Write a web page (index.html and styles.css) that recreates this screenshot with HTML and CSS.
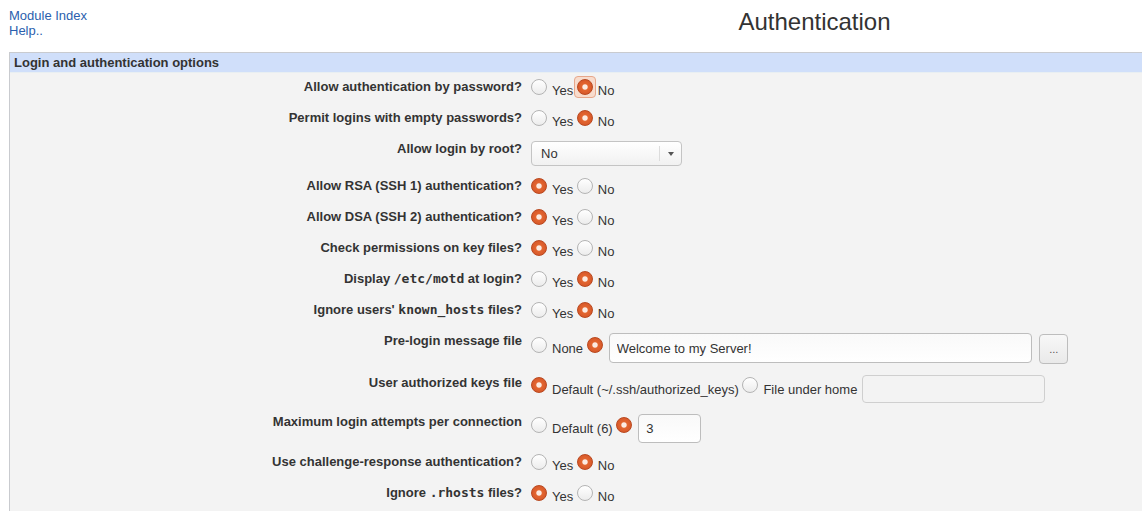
FILE: index.html
```html
<!DOCTYPE html>
<html lang="en">
<head>
<meta charset="utf-8">
<title>Authentication</title>
<link rel="stylesheet" href="styles.css">
</head>
<body>
<div class="top">
  <div class="links">
    <a href="#">Module Index</a>
    <a href="#">Help..</a>
  </div>
  <h1 class="title">Authentication</h1>
</div>

<div class="panel">
  <div class="panel-head">Login and authentication options</div>
  <div class="form">
    <div class="lbl">Allow authentication by password?</div>
    <div class="ctl"><span class="radio"></span><span class="opt">Yes</span> <span class="focus"><span class="radio on"></span></span><span class="opt">No</span></div>

    <div class="lbl">Permit logins with empty passwords?</div>
    <div class="ctl"><span class="radio"></span><span class="opt">Yes</span> <span class="radio on"></span><span class="opt">No</span></div>

    <div class="lbl">Allow login by root?</div>
    <div class="ctl"><span class="select"><span class="sel-val">No</span><span class="sel-arrow"><span class="tri"></span></span></span></div>

    <div class="lbl">Allow RSA (SSH 1) authentication?</div>
    <div class="ctl"><span class="radio on"></span><span class="opt">Yes</span> <span class="radio"></span><span class="opt">No</span></div>

    <div class="lbl">Allow DSA (SSH 2) authentication?</div>
    <div class="ctl"><span class="radio on"></span><span class="opt">Yes</span> <span class="radio"></span><span class="opt">No</span></div>

    <div class="lbl">Check permissions on key files?</div>
    <div class="ctl"><span class="radio on"></span><span class="opt">Yes</span> <span class="radio"></span><span class="opt">No</span></div>

    <div class="lbl">Display <code>/etc/motd</code> at login?</div>
    <div class="ctl"><span class="radio"></span><span class="opt">Yes</span> <span class="radio on"></span><span class="opt">No</span></div>

    <div class="lbl">Ignore users' <code>known_hosts</code> files?</div>
    <div class="ctl"><span class="radio"></span><span class="opt">Yes</span> <span class="radio on"></span><span class="opt">No</span></div>

    <div class="lbl">Pre-login message file</div>
    <div class="ctl tall"><span class="radio"></span><span class="opt">None</span> <span class="radio on"></span><input class="field wide" type="text" value="Welcome to my Server!"> <button class="btn" type="button">...</button></div>

    <div class="lbl">User authorized keys file</div>
    <div class="ctl tall"><span class="radio on"></span><span class="opt">Default (~/.ssh/authorized_keys)</span> <span class="radio"></span><span class="opt">File under home</span> <input class="field home" type="text" value="" disabled></div>

    <div class="lbl">Maximum login attempts per connection</div>
    <div class="ctl tall"><span class="radio"></span><span class="opt">Default (6)</span> <span class="radio on"></span><input class="field small" type="text" value="3"></div>

    <div class="lbl">Use challenge-response authentication?</div>
    <div class="ctl"><span class="radio"></span><span class="opt">Yes</span> <span class="radio on"></span><span class="opt">No</span></div>

    <div class="lbl">Ignore <code>.rhosts</code> files?</div>
    <div class="ctl"><span class="radio on"></span><span class="opt">Yes</span> <span class="radio"></span><span class="opt">No</span></div>
  </div>
</div>
</body>
</html>
```

FILE: styles.css
```css
html, body {
  background: #ffffff;
}
body {
  margin: 8px 0 0 8px;
  font-family: "Liberation Sans", Arial, sans-serif;
  font-size: 13px;
  color: #333333;
  overflow: hidden;
}

.top {
  display: flex;
  height: 44px;
}
.links {
  width: 479px;
  display: flex;
  flex-direction: column;
  line-height: 15px;
}
.links a {
  color: #2b5fae;
  text-decoration: none;
  align-self: flex-start;
  padding-left: 1px;
}
.title {
  flex: 1;
  margin: 0;
  text-align: center;
  font-size: 24px;
  font-weight: normal;
  line-height: 28px;
  color: #333333;
}

.panel {
  margin-left: 1px;
  border-top: 1px solid #c9cbcf;
  border-left: 1px solid #c9cbcf;
  background: #f3f3f3;
  min-height: 480px;
}
.panel-head {
  background: #d0dffa;
  border-bottom: 1px solid #e9eff2;
  line-height: 19px;
  padding-left: 4px;
  font-weight: bold;
  color: #333333;
}

.form {
  display: grid;
  grid-template-columns: 521px 1fr;
}
.lbl {
  padding: 6px 9px 6px 0;
  text-align: right;
  font-weight: bold;
  line-height: 16px;
  color: #333333;
}
.lbl code {
  font-family: "DejaVu Sans Mono", "Liberation Mono", monospace;
  font-size: 13px;
  font-weight: bold;
}
.ctl {
  padding: 6px 0 6px;
  line-height: 15px;
  white-space: nowrap;
}
.ctl.tall {
  padding-bottom: 5px;
}

.radio {
  display: inline-block;
  box-sizing: border-box;
  width: 16px;
  height: 16px;
  border-radius: 50%;
  border: 1px solid #b4b4b4;
  background: linear-gradient(#ffffff, #ececec);
  margin-right: 5px;
  vertical-align: baseline;
}
.radio.on {
  border-color: #b9481f;
  background: radial-gradient(circle at 50% 50%, #fcebe2 0, #fcebe2 2.2px, #e36630 3.2px, #d8592a 7px);
}
.focus {
  display: inline-block;
  box-sizing: border-box;
  padding: 2px;
  margin: -3px 2px -3px -3px;
  border: 1px solid #e7a78b;
  border-radius: 4px;
  background: #f8dccd;
  line-height: 0;
}
.focus .radio {
  margin-right: 0;
}
.opt {
  color: #333333;
}

.select {
  display: inline-flex;
  box-sizing: border-box;
  width: 151px;
  height: 25px;
  border: 1px solid #c4c4c4;
  border-radius: 4px;
  background: linear-gradient(#ffffff, #f1f1f1);
  line-height: 23px;
  color: #333333;
}
.sel-val {
  flex: 1;
  padding-left: 9px;
}
.sel-arrow {
  width: 21px;
  border-left: 1px solid #dcdcdc;
  margin: 4px 0;
  display: flex;
  align-items: center;
  justify-content: center;
}
.tri {
  width: 0;
  height: 0;
  border-left: 3px solid transparent;
  border-right: 3px solid transparent;
  border-top: 4px solid #555555;
}

.field {
  box-sizing: border-box;
  margin: 0 0 0 1px;
  padding: 0 7px;
  border: 1px solid #bdbdbd;
  border-radius: 4px;
  background: linear-gradient(#f9f9f9, #ffffff);
  font-family: "Liberation Sans", Arial, sans-serif;
  font-size: 13px;
  color: #333333;
  vertical-align: baseline;
}
.field.wide {
  width: 423px;
  height: 30px;
}
.field.home {
  width: 183px;
  height: 28px;
  margin-left: 1px;
  background: #f3f3f3;
  border-color: #cfcfcf;
}
.field.small {
  width: 63px;
  height: 29px;
}

.btn {
  box-sizing: border-box;
  width: 29px;
  height: 30px;
  margin: 0 0 0 4px;
  padding: 0;
  border: 1px solid #bdbdbd;
  border-radius: 4px;
  background: linear-gradient(#f7f7f7, #e9e9e9);
  font-family: "Liberation Sans", Arial, sans-serif;
  font-size: 11px;
  color: #555555;
  vertical-align: baseline;
}
```
